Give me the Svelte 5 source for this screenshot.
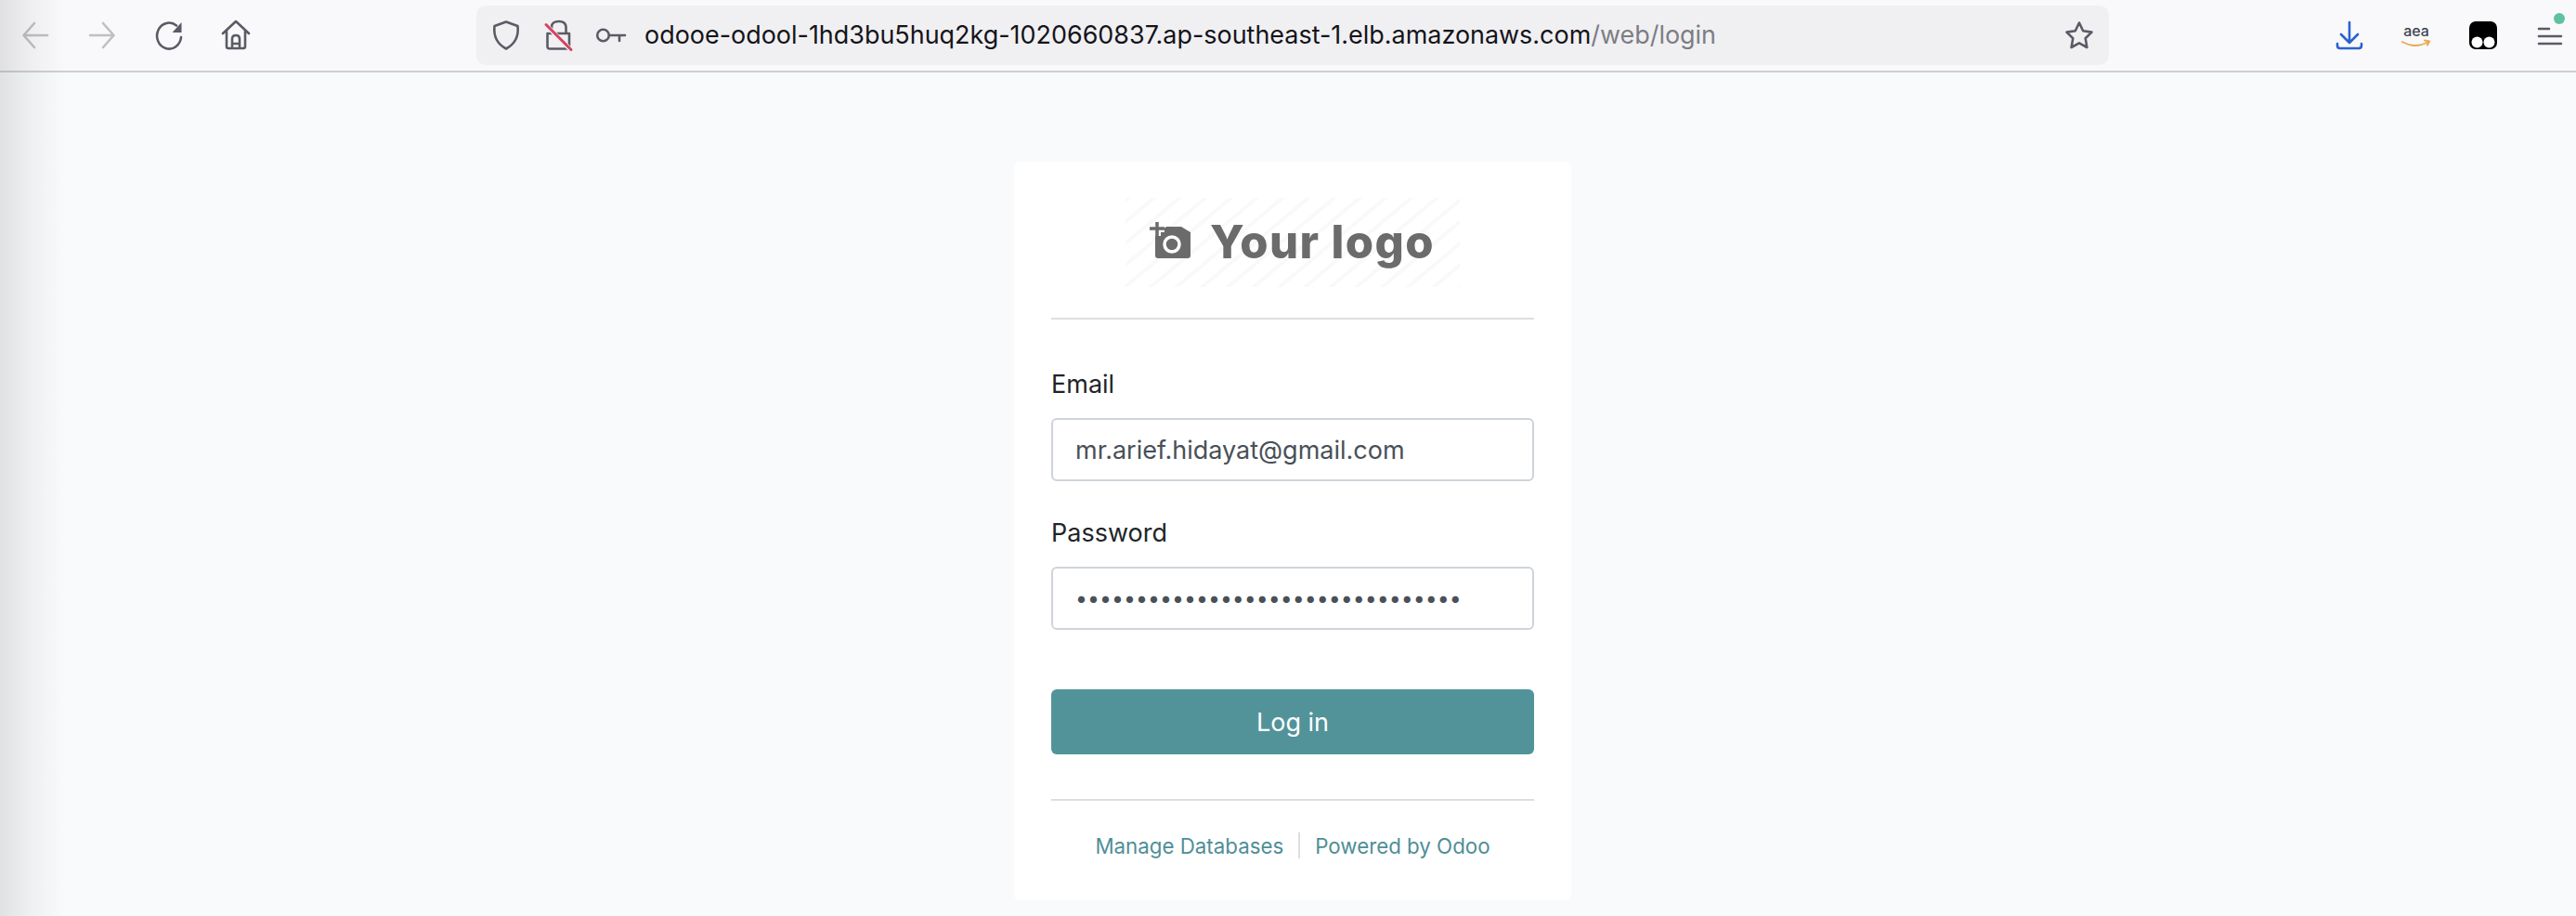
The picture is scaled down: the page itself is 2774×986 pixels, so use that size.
<script>
  const host = 'odooe-odool-1hd3bu5huq2kg-1020660837.ap-southeast-1.elb.amazonaws.com';
  const path = '/web/login';
</script>

<div class="window">
  <header class="toolbar">
    <nav class="nav">
      <svg class="ic dim" viewBox="0 0 32 32"><path d="M29 16H4M15 3 3.500 16 15 29"/></svg>
      <svg class="ic dim" viewBox="0 0 32 32"><path d="M3 16h25M17 3l11.500 13L17 29"/></svg>
      <svg class="ic" viewBox="0 0 32 32"><path d="M24 5.500A13 14 0 1 0 29 18"/><path class="solid" d="M29.500 2v11h-10z"/></svg>
      <svg class="ic" viewBox="0 0 32 32"><path d="M2 14 16 1l14 13M6 11v17q0 2 2 2h16q2 0 2-2V11M12 30V20q0-4 4-4t4 4v10M12 25h8"/></svg>
    </nav>
    <div class="urlbar">
      <svg class="shield" viewBox="0 0 28 32"><path d="M14 1.500 26.500 6c1 9-.5 18-12.500 24.500C2 24 .5 15 1.500 6z"/></svg>
      <svg class="lock" viewBox="0 0 28 32">
        <path d="M1.500 14h23.500v14q0 2.500-2.500 2.500H4q-2.500 0-2.500-2.500zM6 14V7q0-6 8-6 7 0 7.500 6v7"/>
        <path class="gap" d="M-2 3 27 32"/>
        <path class="slash" d="M0 4.500 27 31.500"/>
      </svg>
      <svg class="key" viewBox="0 0 32 16"><circle cx="7.500" cy="8" r="6.300"/><path d="M14 8h17M25 8v6"/></svg>
      <div class="url"><span class="host">{host}</span><span class="path">{path}</span></div>
      <svg class="star" viewBox="0 0 32 32"><path d="M16 2.500l4.200 8.800 9.300 1.300-6.800 6.700 1.700 9.700-8.400-4.700-8.400 4.700 1.700-9.700-6.800-6.700 9.300-1.300z"/></svg>
    </div>
    <div class="actions">
      <svg class="ic blue" viewBox="0 0 32 32"><path d="M16 2v22M7 15l9 9 9-9M3 25v2q0 3 3 3h20q3 0 3-3v-2"/></svg>
      <svg class="aea" viewBox="0 0 32 32">
        <text x="16" y="17" text-anchor="middle">aea</text>
        <path d="M1 23q14 8 28 0M25 21.500l5 1-2 4" />
      </svg>
      <svg class="ic ghost" viewBox="0 0 32 32"><rect x="1" y="1" width="30" height="30" rx="7"/><circle cx="9.500" cy="23.500" r="6"/><circle cx="22.500" cy="23.500" r="6"/></svg>
      <div class="menu">
        <svg class="ic" viewBox="0 0 32 32"><path d="M4 9h11M4 17h24M4 25h24"/></svg>
        <span class="dot"></span>
      </div>
    </div>
  </header>

  <main class="page">
    <section class="card">
      <div class="logo">
        <svg viewBox="0 0 360 96" width="360" height="96">
          <defs>
            <pattern id="stripes" width="27.700" height="96" patternUnits="userSpaceOnUse" patternTransform="skewX(-50)">
              <rect x="0" y="0" width="6" height="96" fill="#f8f9fb"/>
            </pattern>
          </defs>
          <rect width="360" height="96" fill="url(#stripes)"/>
          <g class="logo-art">
            <path d="M32 34h8l4-3h16l10 6v25q0 3-3 3H35q-3 0-3-3z"/>
            <path class="logo-halo" d="M26 33h16M34 26v15"/>
            <path class="logo-plus" d="M26 33h16M34 26v15"/>
            <circle cx="50" cy="50" r="8" class="logo-lens"/>
            <text x="91" y="65">Your logo</text>
          </g>
        </svg>
      </div>
      <hr />
      <form class="form">
        <label for="login">Email</label>
        <input id="login" type="text" value="mr.arief.hidayat@gmail.com" readonly />
        <label for="password" class="second">Password</label>
        <input id="password" class="pw" type="password" value="12345678901234567890123456789012" readonly />
        <button type="button">Log in</button>
      </form>
      <hr class="lower" />
      <footer class="links">
        <a href="#db">Manage Databases</a>
        <span class="sep"></span>
        <a href="#odoo">Powered by Odoo</a>
      </footer>
    </section>
  </main>
  <div class="edge"></div>
</div>

<style>
  :global(body) { margin: 0; background: #f9fafb; }
  .window {
    position: relative;
    width: 2774px;
    height: 986px;
    overflow: hidden;
    background: #f9fafb;
    font-family: Inter, "Liberation Sans", sans-serif;
    color: #212529;
  }
  .toolbar {
    display: flex;
    align-items: center;
    height: 76px;
    background: #f9f9fb;
    border-bottom: 2px solid #cfcfd4;
  }
  .nav, .actions { display: flex; align-items: center; gap: 40px; }
  .nav { width: 513px; padding-left: 22px; box-sizing: border-box; }
  svg { display: block; flex: none; overflow: visible; }
  .ic { width: 32px; height: 32px; fill: none; stroke: #5b5b66; stroke-width: 2.600; stroke-linecap: round; stroke-linejoin: round; }
  .ic .solid { fill: #5b5b66; stroke: none; }
  .dim { stroke: #bfbfc4; }
  .blue { stroke: #2a63cf; }
  .ghost { stroke: none; fill: #000; }
  .ghost circle { fill: #fff; }
  .urlbar {
    display: flex;
    align-items: center;
    width: 1758px;
    height: 64px;
    box-sizing: border-box;
    padding-left: 18px;
    background: #f0f0f2;
    border-radius: 10px;
  }
  .urlbar svg { fill: none; stroke: #5b5b66; stroke-width: 2.600; stroke-linecap: round; stroke-linejoin: round; }
  .shield { width: 28px; height: 32px; }
  .lock { width: 28px; height: 32px; margin-left: 29px; }
  .urlbar .lock .gap { stroke: #f0f0f2; stroke-width: 5; }
  .urlbar .lock .slash { stroke: #d7415f; stroke-width: 3; }
  .key { width: 32px; height: 16px; margin-left: 26px; }
  .url { margin-left: 20px; margin-top: -2px; font-size: 26.950px; white-space: nowrap; flex: 1; min-width: 0; }
  .host { color: #15141a; }
  .path { color: #7d7d85; }
  .star { width: 32px; height: 32px; margin-right: 16px; }
  .actions { margin-left: 243px; }
  .aea { width: 32px; height: 32px; fill: none; }
  .aea text { font: 500 16px Inter, sans-serif; fill: #3f4450; }
  .aea path { stroke: #e9a94f; stroke-width: 2; fill: none; stroke-linecap: round; }
  .menu { position: relative; width: 32px; height: 32px; }
  .dot { position: absolute; top: -8px; left: 20px; width: 12px; height: 12px; border-radius: 50%; background: #5fc1a0; }

  .page { display: flex; justify-content: center; padding: 96px 0 0 10px; }
  .card {
    width: 600px;
    height: 795px;
    box-sizing: border-box;
    padding: 39px 40px 0;
    background: #fff;
    border-radius: 6px;
  }
  .logo { display: flex; justify-content: center; height: 96px; margin-bottom: 33px; }
  .logo-art { filter: blur(0.6px); fill: #6b6b6b; }
  .logo-art text { font: 800 49px Inter, sans-serif; letter-spacing: 1.400px; fill: #6b6b6b; }
  .logo-halo { fill: none; stroke: #fff; stroke-width: 8; }
  .logo-plus { fill: none; stroke: #6b6b6b; stroke-width: 3.500; }
  .logo-lens { fill: none; stroke: #fff; stroke-width: 3.500; }
  hr { border: 0; height: 2px; margin: 0; background: #dcdfe2; }
  .form { display: flex; flex-direction: column; }
  label { font-size: 27px; line-height: 42px; margin-top: 49px; margin-bottom: 15px; color: #212529; }
  label.second { margin-top: 35px; margin-bottom: 15px; }
  input {
    height: 68px;
    box-sizing: border-box;
    padding: 0 24px;
    border: 2px solid #ced4da;
    border-radius: 6px;
    background: #fff;
    font: 400 27px Inter, sans-serif;
    color: #495057;
    outline: none;
  }
  .pw { font-size: 23.100px; }
  button {
    height: 70px;
    margin-top: 64px;
    border: 0;
    border-radius: 6px;
    background: #52939a;
    color: #fff;
    font: 400 27px Inter, sans-serif;
  }
  .lower { margin-top: 48px; }
  .links { display: flex; justify-content: center; align-items: center; gap: 16px; margin-top: 34px; }
  .links a { color: #4f8e96; font-size: 22.300px; text-decoration: none; }
  .sep { width: 2px; height: 28px; background: #dcdfe2; }
  .edge {
    position: absolute;
    inset: 0 auto 0 0;
    width: 70px;
    background: linear-gradient(90deg, rgba(60,60,70,.13), rgba(60,60,70,.05) 50%, rgba(60,60,70,0));
    pointer-events: none;
  }
</style>
